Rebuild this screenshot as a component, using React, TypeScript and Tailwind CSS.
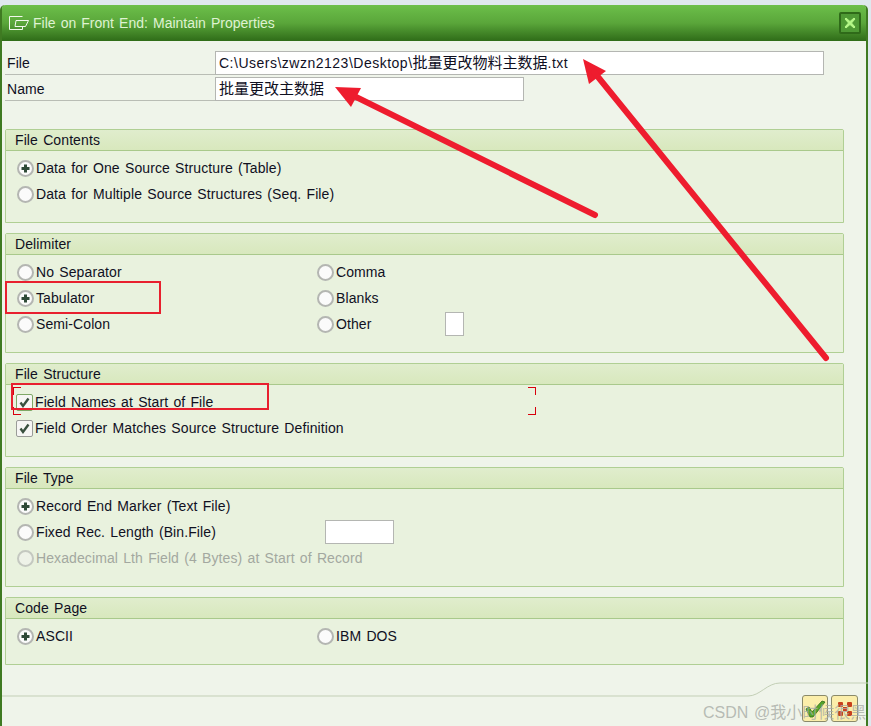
import type { ReactNode } from 'react';

const Radio = ({ on, off }: { on?: boolean; off?: boolean }) => (
  <span
    className={`relative flex h-[17px] w-[17px] shrink-0 items-center justify-center rounded-full border-2 ${
      off ? 'border-[#c4c8c0] bg-[#eef2e8]' : 'border-[#b4b6b2] bg-[#fbfbfb]'
    }`}
  >
    {on && (
      <svg width="9" height="9" viewBox="0 0 9 9">
        <path d="M3 0.5h3v2.5h2.5v3H6v2.5H3V6H0.5V3H3z" fill="#2f4a38" />
      </svg>
    )}
  </span>
);

const Check = ({ focus }: { focus?: boolean }) => (
  <span
    className={`flex h-[17px] w-[17px] shrink-0 items-center justify-center rounded-[2px] border bg-[#f6f6f4] ${
      focus ? 'border-[#7fa866]' : 'border-[#9a9c98]'
    }`}
  >
    <svg width="13" height="13" viewBox="0 0 13 13">
      <path d="M2.5 6.5l2.5 3.5L10.5 2.5" fill="none" stroke="#39503f" strokeWidth="2.4" />
    </svg>
  </span>
);

const RadioRow = ({
  label,
  on,
  off,
  width,
}: {
  label: string;
  on?: boolean;
  off?: boolean;
  width?: string;
}) => (
  <div className={`flex items-center gap-[2px] ${width ?? ''}`}>
    <Radio on={on} off={off} />
    <span className={off ? 'text-[#a3a8a0]' : 'text-[#10101f]'}>{label}</span>
  </div>
);

const Group = ({
  title,
  height,
  children,
}: {
  title: string;
  height: string;
  children: ReactNode;
}) => (
  <section className={`mx-[3px] w-[839px] rounded-t-[2px] border border-[#b0cf94] bg-[#e9f2de] ${height}`}>
    <h2 className="flex h-[21px] items-center border-b border-[#a9c98b] bg-gradient-to-b from-[#e0edcd] to-[#d8e8bd] pl-[9px] font-normal text-[#10101f]">
      {title}
    </h2>
    <div className="flex flex-col pl-[11px] pt-[4px]">{children}</div>
  </section>
);

const Row = ({ children }: { children: ReactNode }) => (
  <div className="flex h-[26px] items-center">{children}</div>
);

const cjk = 'text-[15px] tracking-[0px]';

export default function App() {
  return (
    <div
      className="relative h-[726px] w-[871px] overflow-hidden bg-[#dfe8ee] text-[14px] tracking-[0.1px] [word-spacing:1.2px]"
      style={{ fontFamily: '"Liberation Sans", "Noto Sans CJK SC", sans-serif' }}
    >
      <div className="mt-[5px] flex h-[721px] w-[868px] flex-col rounded-t-[5px] border-x-2 border-[#3f7a22] bg-[#eff4ea]">
        <header className="flex h-[36px] shrink-0 items-center justify-between rounded-t-[4px] bg-gradient-to-b from-[#6cbf4a] via-[#5aa63a] to-[#2f6c18] pl-[7px] pr-[5px]">
          <div className="flex items-center gap-[4px]">
            <svg width="20" height="14" viewBox="0 0 20 14" fill="none" stroke="#f2f8ec" strokeWidth="1">
              <path d="M13.5 0.5H0.5v13h13v-3" />
              <path d="M7 4.5h12.5l-3 6H6z" />
            </svg>
            <span className="text-[14px] tracking-[0px] text-[#dff2d2]">
              File on Front End: Maintain Properties
            </span>
          </div>
          <button className="flex h-[22px] w-[22px] items-center justify-center rounded-[2px] border-2 border-[#2f6a19] bg-[#4f9a35]">
            <svg width="12" height="12" viewBox="0 0 12 12">
              <path d="M1 2l1-1 4 3.5L10 1l1 1-3.5 4L11 10l-1 1-4-3.5L2 11l-1-1 3.5-4z" fill="#b6f889" stroke="#b6f889" />
            </svg>
          </button>
        </header>

        <div className="shrink-0 pl-[3px] pt-[9px]">
          <div className="flex h-[26px]">
            <div className="flex h-[25px] w-[210px] items-center border-b border-[#b9bdb5] pl-[2px] pt-[2px] text-[#10101f]">File</div>
            <div className="mt-px flex h-[24px] w-[609px] items-center border border-[#b4b6b2] bg-white pl-[3px] text-[#10101f]">
              <span className="tracking-[0.5px]">C:\Users\zwzn2123\Desktop\</span>
              <span className={cjk}>批量更改物料主数据</span>
              <span className="tracking-[0.5px]">.txt</span>
            </div>
          </div>
          <div className="flex h-[25px]">
            <div className="flex w-[210px] items-center border-b border-[#b9bdb5] pl-[2px] pt-[2px] text-[#10101f]">Name</div>
            <div className={`mt-px flex h-[24px] w-[309px] items-center border border-[#b4b6b2] bg-white pl-[3px] text-[#10101f] ${cjk}`}>
              批量更改主数据
            </div>
          </div>
        </div>

        <div className="mt-[28px] flex flex-col gap-[10px]">
          <Group title="File Contents" height="h-[94px]">
            <Row>
              <RadioRow on label="Data for One Source Structure (Table)" />
            </Row>
            <Row>
              <RadioRow label="Data for Multiple Source Structures (Seq. File)" />
            </Row>
          </Group>

          <Group title="Delimiter" height="h-[120px]">
            <Row>
              <RadioRow label="No Separator" width="w-[300px]" />
              <RadioRow label="Comma" />
            </Row>
            <Row>
              <RadioRow on label="Tabulator" width="w-[300px]" />
              <RadioRow label="Blanks" />
            </Row>
            <Row>
              <RadioRow label="Semi-Colon" width="w-[300px]" />
              <RadioRow label="Other" width="w-[128px]" />
              <span className="h-[24px] w-[19px] border border-[#b4b6b2] bg-white" />
            </Row>
          </Group>

          <Group title="File Structure" height="h-[94px]">
            <Row>
              <div className="-ml-px flex items-center gap-[2px]">
                <Check focus />
                <span className="text-[#10101f]">Field Names at Start of File</span>
              </div>
            </Row>
            <Row>
              <div className="-ml-px flex items-center gap-[2px]">
                <Check />
                <span className="text-[#10101f]">Field Order Matches Source Structure Definition</span>
              </div>
            </Row>
          </Group>

          <Group title="File Type" height="h-[120px]">
            <Row>
              <RadioRow on label="Record End Marker (Text File)" />
            </Row>
            <Row>
              <RadioRow label="Fixed Rec. Length (Bin.File)" width="w-[308px]" />
              <span className="h-[24px] w-[69px] border border-[#b4b6b2] bg-white" />
            </Row>
            <Row>
              <RadioRow off label="Hexadecimal Lth Field (4 Bytes) at Start of Record" />
            </Row>
          </Group>

          <Group title="Code Page" height="h-[68px]">
            <Row>
              <RadioRow on label="ASCII" width="w-[300px]" />
              <RadioRow label="IBM DOS" />
            </Row>
          </Group>
        </div>

        <footer className="relative mt-auto flex h-[31px] shrink-0 items-start justify-end gap-[3px] pr-[8px]">
          <svg className="absolute -top-[13px] left-0" width="866" height="15" viewBox="0 0 866 15" fill="none">
            <path d="M0 14H746C758 14 765 1 778 1H866" stroke="#c3cfb6" strokeWidth="1" />
          </svg>
          <button className="relative flex h-[27px] w-[26px] items-center justify-center rounded-[3px] border border-[#8a8a6a] bg-[#fbeeaa]">
            <svg width="22" height="20" viewBox="0 0 22 20">
              <path d="M2 10l3-2 3 5L18 2l3 1L9 18H6z" fill="#55a52b" stroke="#2f6d1a" strokeWidth="0.8" />
            </svg>
          </button>
          <button className="relative flex h-[27px] w-[27px] items-center justify-center rounded-[3px] border border-[#8a8a6a] bg-[#fbeeaa]">
            <svg width="16" height="16" viewBox="0 0 16 16" fill="#c8401c">
              <rect x="1" y="1" width="5" height="5" rx="1" />
              <rect x="10" y="1" width="5" height="5" rx="1" />
              <rect x="1" y="10" width="5" height="5" rx="1" />
              <rect x="10" y="10" width="5" height="5" rx="1" />
              <rect x="6" y="6" width="4" height="4" />
            </svg>
          </button>
        </footer>
      </div>

      {/* focus corners */}
      <span className="absolute left-[13px] top-[387px] h-[8px] w-[8px] border-l border-t border-[#d8000c]" />
      <span className="absolute left-[13px] top-[407px] h-[8px] w-[8px] border-b border-l border-[#d8000c]" />
      <span className="absolute left-[528px] top-[387px] h-[8px] w-[8px] border-r border-t border-[#d8000c]" />
      <span className="absolute left-[528px] top-[407px] h-[8px] w-[8px] border-b border-r border-[#d8000c]" />

      {/* annotations */}
      <span className="absolute left-[5px] top-[281px] h-[33px] w-[156px] border-2 border-[#e8202e]" />
      <span className="absolute left-[11px] top-[383px] h-[27px] w-[258px] border-2 border-[#e8202e]" />
      <svg className="pointer-events-none absolute left-0 top-0" width="871" height="726" viewBox="0 0 871 726">
        <g fill="#ee1c2e">
          <path d="M335 87L361 88L351 107z" />
          <path d="M583 59L606 71L589 84z" />
        </g>
        <g stroke="#ee1c2e" strokeWidth="6" strokeLinecap="round">
          <line x1="350" y1="94" x2="595" y2="215" />
          <line x1="594" y1="72" x2="826" y2="358" />
        </g>
      </svg>

      <span className="absolute left-[703px] top-[701px] text-[16px] tracking-[0px] text-[#a8aca6]/80">CSDN @我小时候很黑</span>
    </div>
  );
}
